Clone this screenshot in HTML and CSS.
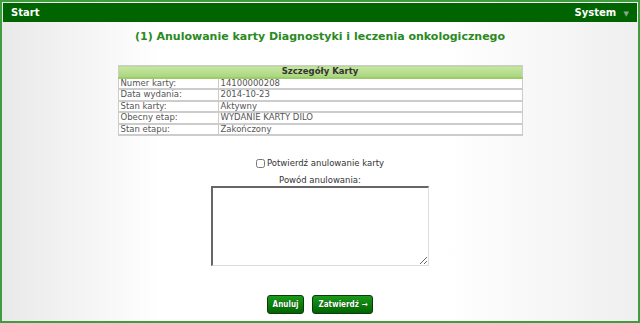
FILE: index.html
```html
<!DOCTYPE html>
<html lang="pl">
<head>
    <meta charset="UTF-8">
    <title>Anulowanie karty DiLO</title>
    <link rel="stylesheet" href="styles.css">
</head>
<body>
    <div class="frame">
        <div class="topbar">
            <span class="start">Start</span>
            <span class="system">System <span class="caret">&#9660;</span></span>
        </div>

        <div class="content">
            <h1 class="title">(1) Anulowanie karty Diagnostyki i leczenia onkologicznego</h1>

            <table class="details">
                <tr><th colspan="2">Szczegóły Karty</th></tr>
                <tr><td class="label">Numer karty:</td><td>14100000208</td></tr>
                <tr><td class="label">Data wydania:</td><td>2014-10-23</td></tr>
                <tr><td class="label">Stan karty:</td><td>Aktywny</td></tr>
                <tr><td class="label">Obecny etap:</td><td>WYDANIE KARTY DILO</td></tr>
                <tr><td class="label">Stan etapu:</td><td>Zakończony</td></tr>
            </table>

            <div class="confirm">
                <label><input type="checkbox" class="check"> Potwierdź anulowanie karty</label>
            </div>

            <div class="reason">
                <p>Powód anulowania:</p>
                <textarea class="reason-box"></textarea>
            </div>

            <div class="buttons">
                <button class="btn">Anuluj</button>
                <button class="btn">Zatwierdź &rarr;</button>
            </div>
        </div>
    </div>
</body>
</html>
```

FILE: styles.css
```css
*{
    padding: 0;
    margin: 0;
    box-sizing: border-box;
}

html, body{
    height: 100%;
}

body{
    font-family: "DejaVu Sans", Verdana, sans-serif;
    background: #fff;
}

.frame{
    height: 323px;
    border: 2px solid #3f9d3f;
    padding: 1px;
    background: linear-gradient(to right, #e9e9e9 0%, #ffffff 25%, #ffffff 70%, #efefef 100%);
    display: flex;
    flex-direction: column;
}

.topbar{
    height: 19px;
    background-color: #006400;
    color: #fff;
    font-weight: bold;
    font-size: 10px;
    display: flex;
    justify-content: space-between;
    align-items: center;
    padding: 0 8px 0 8px;
}

.caret{
    color: #8aa88a;
    font-size: 7px;
    margin-left: 4px;
}

.content{
    flex: 1;
    display: flex;
    flex-direction: column;
    align-items: center;
}

.title{
    color: #2a8a1e;
    font-size: 11px;
    font-weight: bold;
    margin-top: 8px;
    height: 27px;
}

.details{
    width: 405px;
    border-collapse: collapse;
    font-size: 8.5px;
    color: #555;
    margin-top: 8px;
}

.details th{
    height: 12px;
    background: linear-gradient(to bottom, #c8e6a4, #a8d67c);
    color: #333;
    font-size: 8.5px;
    text-align: center;
    border: 1px solid #ccc;
    border-bottom: 2px solid #9ccc6c;
}

.details td{
    height: 11.5px;
    border: 1px solid #ccc;
    border-width: 2px 1px 0 1px;
    padding: 0 2px;
    background: #fff;
    line-height: 9px;
    vertical-align: middle;
}

.details tr:last-child td{
    border-bottom: 2px solid #ccc;
}

.details td.label{
    width: 100px;
}

.confirm{
    margin-top: 22px;
    font-size: 8.5px;
    color: #333;
}

.confirm label{
    display: flex;
    align-items: center;
    gap: 2px;
}

.check{
    width: 9px;
    height: 9px;
    margin: 0;
}

.reason{
    margin-top: 7px;
    text-align: center;
    font-size: 8.5px;
    color: #333;
}

.reason p{
    margin-bottom: 1px;
}

.reason-box{
    display: block;
    width: 218px;
    height: 80px;
    border: 1px solid #ddd;
    border-top: 2px solid #666;
    border-left: 2px solid #666;
    background: #fff;
}

.buttons{
    margin-top: 29px;
    display: flex;
    gap: 8px;
}

.btn{
    font-family: "DejaVu Sans Condensed", "DejaVu Sans", sans-serif;
    font-size: 8px;
    font-weight: bold;
    color: #fff;
    text-shadow: 0 0 1px #003300;
    background: linear-gradient(to bottom, #1a9a1a, #006400);
    border: 1px solid #0b3b0b;
    border-radius: 3px;
    height: 19px;
    padding: 0 5px;
}
```
